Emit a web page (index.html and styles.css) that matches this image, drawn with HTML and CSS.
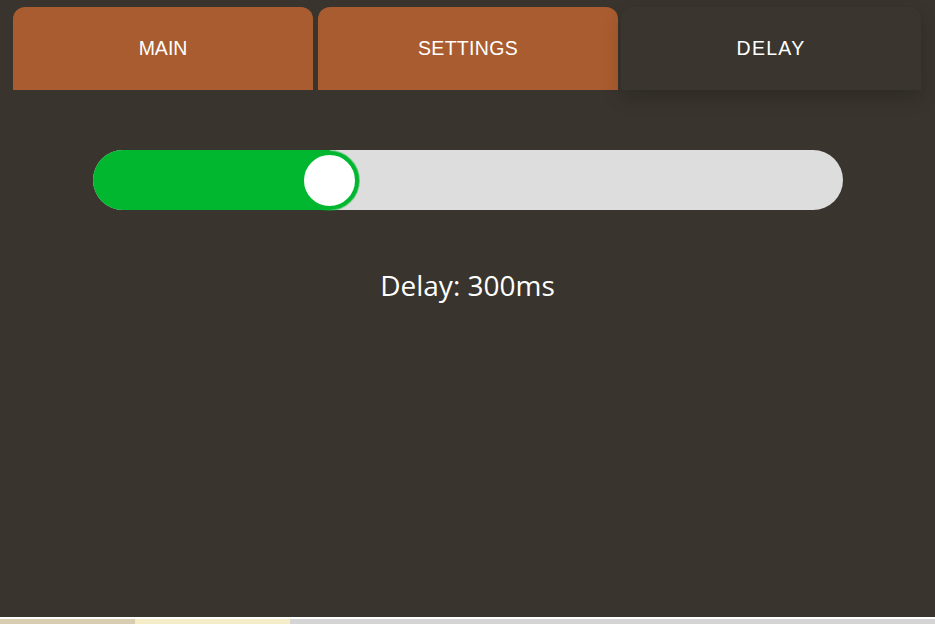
FILE: index.html
```html
<!DOCTYPE html>
<html>
<head>
<meta charset="utf-8">
<link rel="stylesheet" href="styles.css">
</head>
<body>
<div class="page">
  <nav class="tabs">
    <button class="tab">MAIN</button>
    <button class="tab tab-second">SETTINGS</button>
    <button class="tab tab-active">DELAY</button>
  </nav>
  <main class="content">
    <div class="slider">
      <div class="slider-fill" style="width: 237px"></div>
      <div class="slider-thumb"></div>
    </div>
    <p class="label">Delay: 300ms</p>
  </main>
</div>
<div class="bottom-strip">
  <span class="seg seg-a"></span><span class="seg seg-b"></span><span class="seg seg-c"></span>
</div>
</body>
</html>
```
FILE: styles.css
```css
html, body {
  margin: 0;
  padding: 0;
}
body {
  background: #39342e;
  width: 935px;
  height: 624px;
  overflow: hidden;
  display: flex;
  flex-direction: column;
}
.page {
  height: 618px;
  border-bottom: 1px solid #ffffff;
  box-sizing: border-box;
}
.tabs {
  display: flex;
  padding: 7px 0 0 13px;
}
.tab {
  width: 300px;
  height: 83px;
  border: none;
  border-radius: 12px 12px 0 0;
  background: #a95c2f;
  color: #ffffff;
  font-family: "Liberation Sans", Arial, sans-serif;
  font-size: 19.5px;
  padding: 0;
  margin: 0;
}
.tab-second {
  margin-left: 5px;
  letter-spacing: 0.3px;
}
.tab-active {
  margin-left: 3px;
  background: #3a352f;
  letter-spacing: 1.3px;
  box-shadow: 0 8px 18px rgba(0, 0, 0, 0.18);
}
.content {
  display: flex;
  flex-direction: column;
  align-items: center;
  padding-top: 60px;
}
.slider {
  position: relative;
  width: 750px;
  height: 60px;
  border-radius: 30px;
  background: #dddddd;
  margin-left: 1px;
}
.slider-fill {
  height: 60px;
  border-radius: 30px 0 0 30px;
  background: #00b72f;
}
.slider-thumb {
  position: absolute;
  left: 207px;
  top: 0;
  width: 51px;
  height: 51px;
  border-radius: 50%;
  background: #ffffff;
  border: 4px solid #00b72f;
  box-shadow: 0 0 0 1px rgba(0, 183, 47, 0.5);
  margin-top: 0.5px;
}
.label {
  margin: 55px 0 0 0;
  color: #ffffff;
  font-family: "Open Sans", "Noto Sans", sans-serif;
  font-size: 28px;
  line-height: 40px;
}
.bottom-strip {
  display: flex;
  height: 6px;
  background: #ffffff;
  padding-top: 1px;
  box-sizing: border-box;
}
.seg {
  display: block;
  height: 5px;
}
.seg-a { width: 135px; background: #d8cdb0; }
.seg-b { width: 155px; background: #f5ecc8; }
.seg-c { flex: 1; background: #d4d4d4; }
```
